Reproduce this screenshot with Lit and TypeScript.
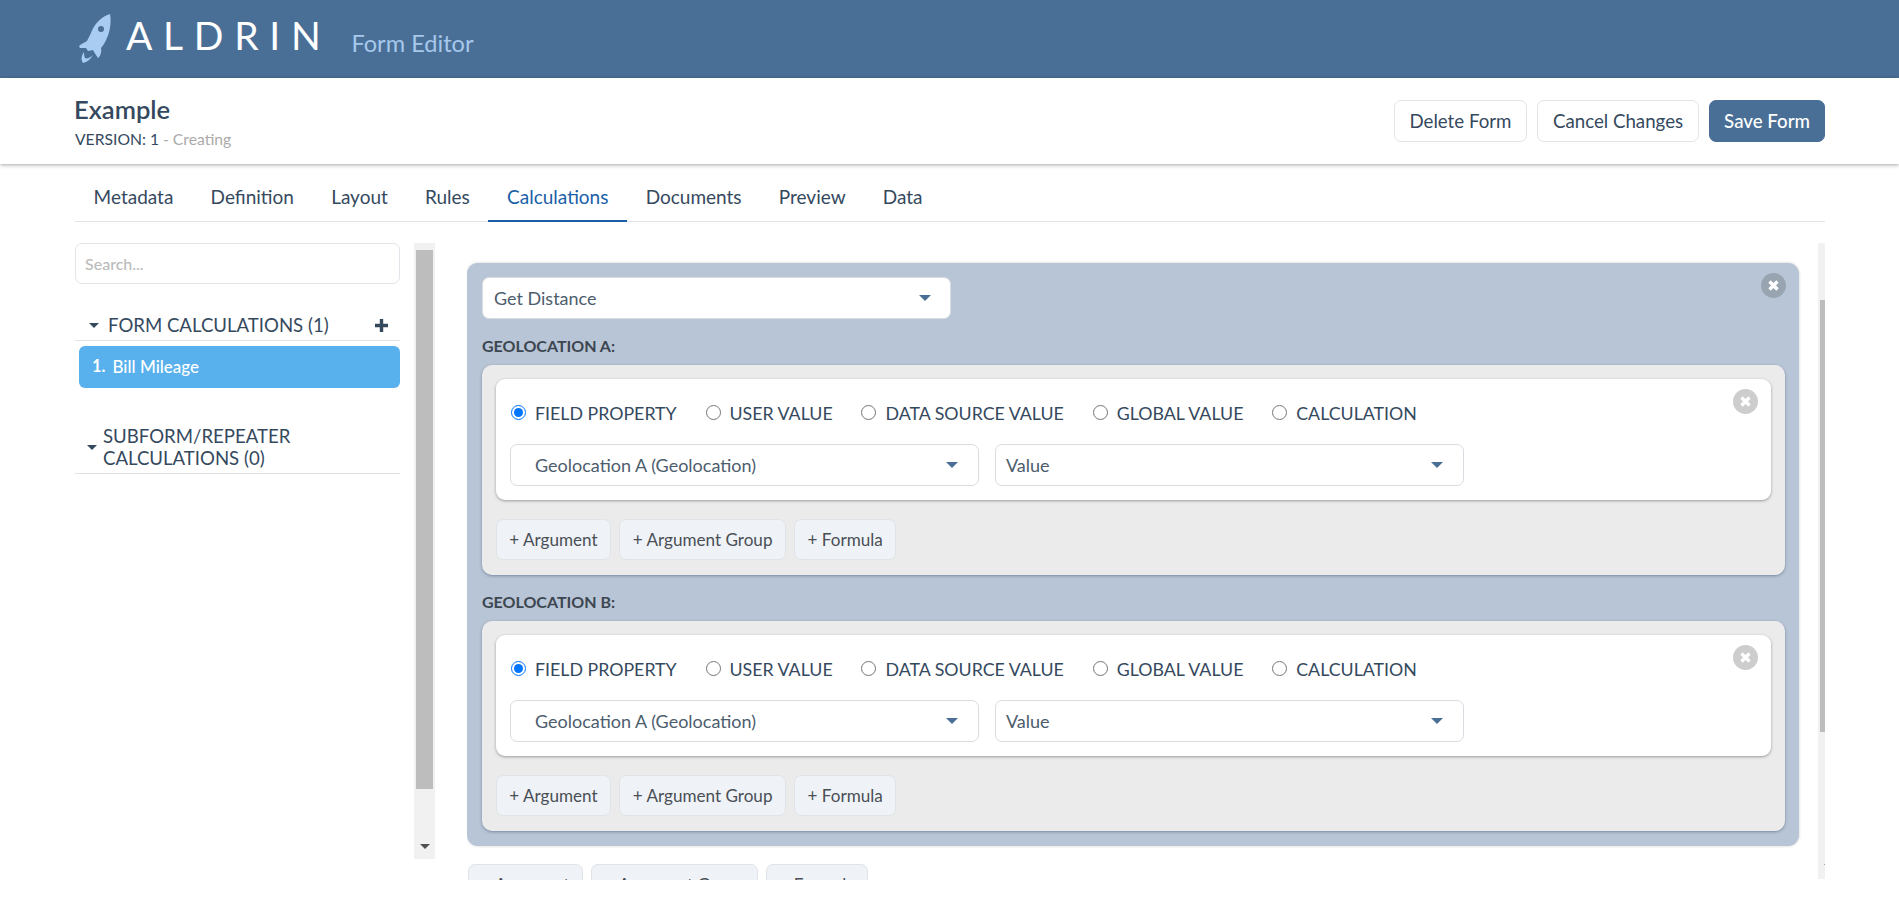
import { LitElement, html, css, type TemplateResult } from "lit";
import { customElement } from "lit/decorators.js";

const TABS = ["Metadata", "Definition", "Layout", "Rules", "Calculations", "Documents", "Preview", "Data"];
const SOURCES = ["FIELD PROPERTY", "USER VALUE", "DATA SOURCE VALUE", "GLOBAL VALUE", "CALCULATION"];

@customElement("app-root")
export class AppRoot extends LitElement {
  static styles = css`
    :host {
      display: block;
      height: 899px;
      overflow: hidden;
      background: #fff;
      color: #35495e;
      font-family: Lato, "Liberation Sans", sans-serif;
      font-size: 18px;
    }
    * { box-sizing: border-box; }

    .topbar {
      height: 78px;
      background: #4a6f96;
      display: flex;
      align-items: flex-start;
      padding: 12px 0 0 78px;
    }
    .rocket { width: 36px; height: 53px; flex: none; }
    .brand {
      margin-left: 12px;
      font-size: 39px;
      font-weight: 400;
      line-height: 40px;
      letter-spacing: 10.7px;
      color: #fff;
      margin-top: 3px;
    }
    .app-name {
      margin-left: 20px;
      margin-top: 16px;
      font-size: 23.6px;
      line-height: 30px;
      color: #a6c8ec;
    }

    .subbar {
      height: 86px;
      padding: 0 74px 0 75px;
      display: flex;
      justify-content: space-between;
      align-items: flex-start;
      box-shadow: 0 1px 4px rgba(0, 0, 0, 0.35);
      position: relative;
    }
    .title { margin-top: 17px; font-size: 25.6px; font-weight: 600; line-height: 29px; margin-left: -1px; }
    .version { margin-top: 6px; font-size: 15.7px; line-height: 18px; }
    .version span { color: #aaa; }
    .actions { display: flex; gap: 10.5px; margin-top: 22px; }
    .btn {
      height: 42px;
      padding: 0 14.5px;
      border: 1px solid #e1e4e8;
      border-radius: 7px;
      background: #fff;
      color: inherit;
      font: inherit;
      font-size: 18.7px;
    }
    .btn.primary { padding: 0 14px; background: #4a6f96; border-color: #4a6f96; color: #fff; font-weight: 500; }

    .tabs {
      margin: 1px 74px 0 75px;
      height: 57px;
      display: flex;
      border-bottom: 1px solid #e2e5e8;
      font-size: 19px;
    }
    .tab { padding: 0 18.6px; line-height: 63px; height: 57px; }
    .tab.active { color: #1a5ea8; border-bottom: 2px solid #1a5ea8; }

    .workspace {
      display: flex;
      align-items: flex-start;
      padding: 21px 74px 0 75px;
    }

    .sidebar { width: 325px; flex: none; }
    .search {
      display: block;
      width: 100%;
      height: 41px;
      padding: 0 9px;
      border: 1px solid #e1e4e8;
      border-radius: 7px;
      font-family: inherit;
      font-size: 16px;
      font-weight: 500;
      outline: none;
    }
    .search::placeholder { color: #bbb; opacity: 1; }
    .section-head {
      display: flex;
      align-items: center;
      border-bottom: 1px solid #dfe2e6;
      font-size: 18.6px;
    }
    .section-head.first { margin-top: 26px; height: 31px; padding: 0 11px 0 14px; }
    .section-head.second { margin-top: 37px; padding: 0 0 4px 12px; line-height: 22px; }
    .section-head .name { margin-left: 9px; flex: 1; }
    .section-head.second .name { margin-left: 6px; }
    .caret {
      flex: none;
      width: 0;
      height: 0;
      border: 5px solid transparent;
      border-bottom: 0;
      border-top: 5px solid #35495e;
    }
    .plus { width: 15px; height: 15px; flex: none; display: block; }
    .calc-item {
      margin: 5px 0 0 4px;
      height: 42px;
      padding: 0 0 2px 13px;
      display: flex;
      align-items: center;
      gap: 7px;
      border-radius: 6px;
      background: #58b0ec;
      color: #fff;
      font-size: 17px;
      font-weight: 500;
    }
    .calc-item b { font-weight: 700; font-size: 16.5px; }

    .scroll-clip { flex: none; width: 7px; overflow: hidden; }
    .scrollbar {
      flex: none;
      width: 21px;
      display: flex;
      flex-direction: column;
      align-items: center;
      background: #f1f1f1;
    }
    .scrollbar.side { height: 616px; margin-left: 14px; }
    .scrollbar.page { height: 636px; }
    .thumb { width: 17px; background: #bdbdbd; }
    .arrow {
      margin-top: auto;
      margin-bottom: 10px;
      width: 0;
      height: 0;
      border: 5px solid transparent;
      border-bottom: 0;
      border-top: 5px solid #505050;
    }

    .main {
      flex: 1;
      margin-left: 32px;
      height: 637px;
      overflow: hidden;
      display: flex;
      align-items: flex-start;
    }
    .content { width: 1332px; flex: none; padding-top: 20px; margin-right: 19px; }
    .panel {
      position: relative;
      padding: 14px 14px 15px 15px;
      border-radius: 11px;
      background: #b8c5d6;
      box-shadow: 0 0 3px rgba(0, 0, 0, 0.2);
    }
    .select {
      height: 42px;
      display: flex;
      align-items: center;
      justify-content: space-between;
      background: #fff;
      border: 1px solid #d9dce0;
      border-radius: 7px;
      color: #4d5d6d;
      font-size: 18px;
    }
    .select .caret { border-top-color: #4a6f96; border-width: 6px; border-bottom: 0; border-top-width: 6px; }
    .select.kind { width: 469px; margin-bottom: 15px; padding: 0 19px 0 11px; }
    .select.field { width: 469px; padding: 0 20px 0 24px; }
    .select.prop { width: 469px; padding: 0 20px 0 10px; }
    .group-label {
      margin-bottom: 7px;
      font-size: 16px;
      font-weight: 700;
      line-height: 24px;
      color: #3c4650;
    }
    .group {
      padding: 14px 14px 15px;
      margin-bottom: 15px;
      border-radius: 10px;
      background: #ebebeb;
      box-shadow: 0 1px 3px rgba(40, 60, 90, 0.45);
    }
    .group:last-child { margin-bottom: 0; }
    .argument {
      position: relative;
      height: 121px;
      padding: 21px 14px 0;
      border-radius: 9px;
      background: #fff;
      box-shadow: 0 1px 3px rgba(0, 0, 0, 0.35);
    }
    .sources { display: flex; height: 26px; margin-bottom: 18px; align-items: center; font-size: 17.8px; }
    .source { display: flex; align-items: center; margin-right: 27.8px; line-height: 26px; }
    .source input {
      width: 15px;
      height: 15px;
      margin: 0 9px 2px 1px;
      flex: none;
    }
    .fields { display: flex; gap: 16px; }
    .adders { display: flex; gap: 8.5px; }
    .group .adders { margin-top: 19px; }
    .adder {
      height: 41px;
      padding: 0 12.3px;
      border: 1px solid #e0e3e7;
      border-radius: 7px;
      background: #eff3f8;
      color: #4a4f55;
      font: inherit;
      font-size: 17.1px;
    }
    .tail { margin: 18px 0 0 1px; }
    .close {
      position: absolute;
      display: flex;
      align-items: center;
      justify-content: center;
      width: 25px;
      height: 25px;
      border-radius: 50%;
    }
    .close svg { display: block; width: 13px; height: 13px; }
    .panel > .close { top: 10px; right: 13px; background: #98a4b0; }
    .argument > .close { top: 10px; right: 13px; background: #cdcdcd; }
  `;

  private renderAdders(extra = ""): TemplateResult {
    return html`<div class="adders ${extra}">
      <button class="adder">+ Argument</button>
      <button class="adder">+ Argument Group</button>
      <button class="adder">+ Formula</button>
    </div>`;
  }

  private renderClose(): TemplateResult {
    return html`<span class="close">
      <svg viewBox="0 0 13 13"><path d="M2.5 2.5l8 8M10.5 2.5l-8 8" stroke="#fff" stroke-width="3.4"/></svg>
    </span>`;
  }

  private renderGroup(label: string, name: string): TemplateResult {
    return html`
      <div class="group-label">${label}</div>
      <div class="group">
        <div class="argument">
          ${this.renderClose()}
          <div class="sources">
            ${SOURCES.map(
              (source, i) => html`<label class="source">
                <input type="radio" name=${name} ?checked=${i === 0} />${source}
              </label>`,
            )}
          </div>
          <div class="fields">
            <div class="select field">Geolocation A (Geolocation)<span class="caret"></span></div>
            <div class="select prop">Value<span class="caret"></span></div>
          </div>
        </div>
        ${this.renderAdders()}
      </div>
    `;
  }

  override render(): TemplateResult {
    return html`
      <header class="topbar">
        <svg class="rocket" viewBox="78 12 36 53">
          <path fill="#a9ccf2" d="M110 14C103 16 95 22 91 33L87 41L80 45C79 46 79 47 80 48L86 48L88 51L93 50L94 52L98 58C100 57 102 52 101 48L104 44C109 36 112 24 110 14Z"/>
          <circle cx="101" cy="29" r="3" fill="#4a6f96"/>
          <path fill="#a9ccf2" d="M84 52C81 56 81 60 83 63C87 62 91 59 93 55C90 58 87 59 85 58C84 56 84 54 84 52Z"/>
        </svg>
        <div class="brand">ALDRIN</div>
        <div class="app-name">Form Editor</div>
      </header>

      <section class="subbar">
        <div>
          <div class="title">Example</div>
          <div class="version">VERSION: 1 <span>- Creating</span></div>
        </div>
        <div class="actions">
          <button class="btn">Delete Form</button>
          <button class="btn">Cancel Changes</button>
          <button class="btn primary">Save Form</button>
        </div>
      </section>

      <nav class="tabs">
        ${TABS.map((tab) => html`<div class="tab ${tab === "Calculations" ? "active" : ""}">${tab}</div>`)}
      </nav>

      <div class="workspace">
        <aside class="sidebar">
          <input class="search" placeholder="Search..." />
          <div class="section-head first">
            <span class="caret"></span>
            <span class="name">FORM CALCULATIONS (1)</span>
            <svg class="plus" viewBox="0 0 15 15"><path d="M7.5 1v13M1 7.5h13" stroke="#35495e" stroke-width="3.4"/></svg>
          </div>
          <div class="calc-item"><b>1.</b> Bill Mileage</div>
          <div class="section-head second">
            <span class="caret"></span>
            <span class="name">SUBFORM/REPEATER<br />CALCULATIONS (0)</span>
          </div>
        </aside>
        <div class="scrollbar side">
          <div class="thumb" style="margin-top:7px;height:539px"></div>
          <span class="arrow"></span>
        </div>

        <main class="main">
          <div class="content">
            <div class="panel">
              ${this.renderClose()}
              <div class="select kind">Get Distance<span class="caret"></span></div>
              ${this.renderGroup("GEOLOCATION A:", "source-a")}
              ${this.renderGroup("GEOLOCATION B:", "source-b")}
            </div>
            ${this.renderAdders("tail")}
          </div>
          <div class="scroll-clip">
            <div class="scrollbar page">
              <div class="thumb" style="margin-top:57px;height:432px"></div>
              <span class="arrow"></span>
            </div>
          </div>
        </main>
      </div>
    `;
  }
}

declare global {
  interface HTMLElementTagNameMap {
    "app-root": AppRoot;
  }
}
